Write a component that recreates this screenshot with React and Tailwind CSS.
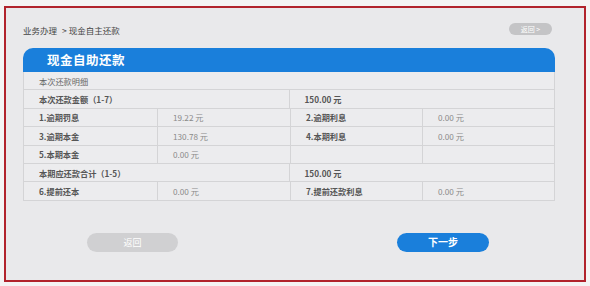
import React from 'react'

const font = { fontFamily: '"Noto Sans CJK SC", "Noto Sans", sans-serif' }

const rows = [
  { type: 'full', label: '本次还款明细' },
  { type: 'split', label: '本次还款金额（1-7）', value: '150.00 元' },
  { type: 'cells', cells: ['1.逾期罚息', '19.22 元', '2.逾期利息', '0.00 元'] },
  { type: 'cells', cells: ['3.逾期本金', '130.78 元', '4.本期利息', '0.00 元'] },
  { type: 'cells', cells: ['5.本期本金', '0.00 元', '', ''] },
  { type: 'split', label: '本期应还款合计（1-5）', value: '150.00 元' },
  { type: 'cells', cells: ['6.提前还本', '0.00 元', '7.提前还款利息', '0.00 元'] },
]

const cell = 'h-[18.4px] flex items-center border-b border-r border-[#d4d4d6] leading-none'

export default function App() {
  return (
    <div className="w-[590px] h-[286px] bg-[#f4f4f4] pt-[6px] px-[4px]" style={font}>
      <div className="w-[582px] h-[276px] border-2 border-[#b1232c] bg-[#e9e9eb] pt-[15px] pl-[17px] pr-[29px]">
        {/* breadcrumb + back */}
        <div className="flex items-center justify-between h-[12px]">
          <div className="text-[8.5px] text-[#444] leading-none mt-[2px]">
            业务办理<span className="ml-[5px]">&gt; 现金自主还款</span>
          </div>
          <div className="w-[43px] h-[12px] mr-[3px] rounded-full bg-[#c4c4c6] text-white text-[7px] flex items-center justify-center leading-none">
            返回 &gt;
          </div>
        </div>

        {/* header */}
        <div className="mt-[13px] h-[24px] bg-[#1a7fdb] rounded-t-[10px] flex items-center pl-[24px]">
          <span className="text-white text-[12.5px] font-bold tracking-[0.5px] leading-none">现金自助还款</span>
        </div>

        {/* table */}
        <div className="border-l border-[#d4d4d6] bg-[#ececee] text-[8.2px]">
          {rows.map((r, i) => {
            if (r.type === 'full') {
              return (
                <div key={i} className={`${cell} pl-[15px] text-[#666]`}>{r.label}</div>
              )
            }
            if (r.type === 'split') {
              return (
                <div key={i} className="grid grid-cols-2">
                  <div className={`${cell} pl-[15px] text-[#555] font-semibold`}>{r.label}</div>
                  <div className={`${cell} pl-[15px] text-[#555] font-semibold`}>{r.value}</div>
                </div>
              )
            }
            return (
              <div key={i} className="grid grid-cols-[134px_133px_132px_1fr]">
                {r.cells.map((c, j) => (
                  <div
                    key={j}
                    className={`${cell} pl-[15px] ${j % 2 === 0 ? 'text-[#555] font-semibold' : 'text-[#8a8a8a]'}`}
                  >
                    {c}
                  </div>
                ))}
              </div>
            )
          })}
        </div>

        {/* buttons */}
        <div className="mt-[32px] flex">
          <div className="ml-[64px] w-[91px] h-[19px] rounded-full bg-[#d0d0d2] text-white text-[9px] flex items-center justify-center leading-none">
            返回
          </div>
          <div className="ml-[219px] w-[92px] h-[19px] rounded-full bg-[#1a7fdb] text-white text-[10px] font-bold flex items-center justify-center leading-none">
            下一步
          </div>
        </div>
      </div>
    </div>
  )
}
